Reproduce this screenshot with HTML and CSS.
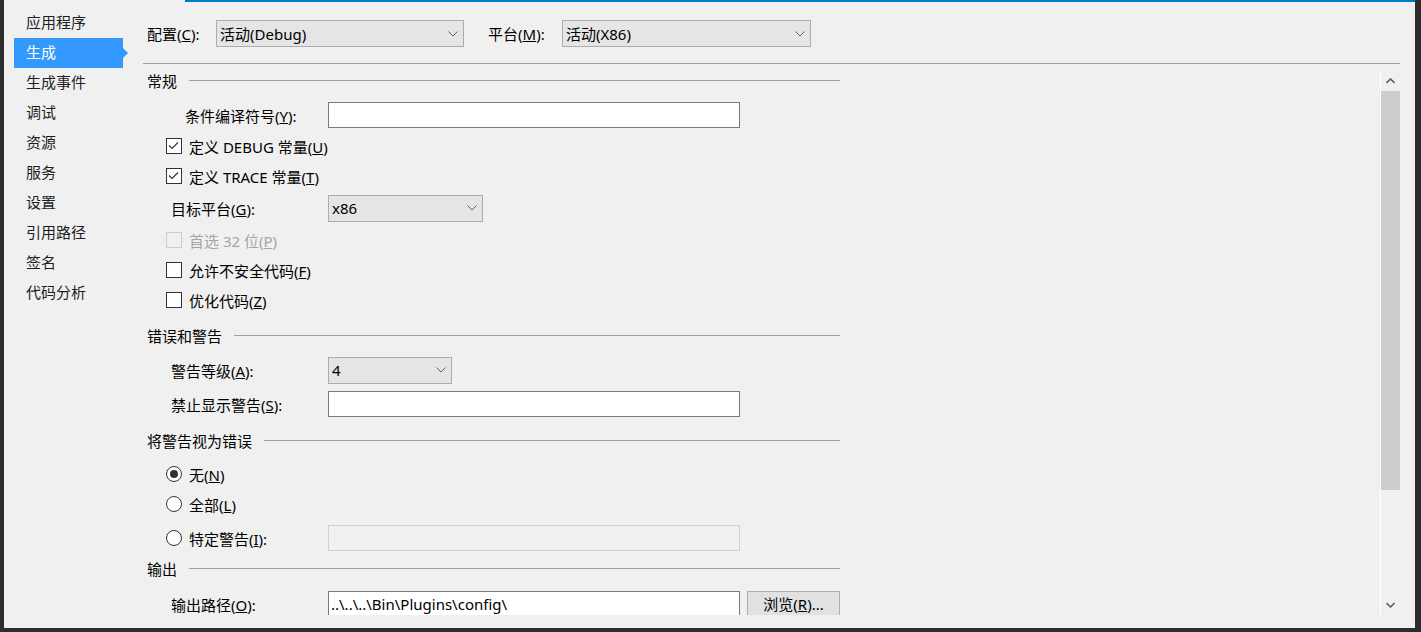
FILE: index.html
```html
<!DOCTYPE html>
<html lang="zh-CN">
<head>
    <meta charset="UTF-8">
    <meta name="viewport" content="width=device-width, initial-scale=1.0">
    <title>项目属性 - 生成</title>
    <link rel="stylesheet" href="styles.css">
</head>
<body>
    <div class="window">
        <div class="topline"></div>
        <div class="cuerpo">

            <ul class="nav">
                <li>应用程序</li>
                <li class="active">生成</li>
                <li>生成事件</li>
                <li>调试</li>
                <li>资源</li>
                <li>服务</li>
                <li>设置</li>
                <li>引用路径</li>
                <li>签名</li>
                <li>代码分析</li>
            </ul>

            <div class="main">
                <div class="toolbar">
                    <span class="tlabel">配置(<u>C</u>):</span>
                    <div class="combo cfg">
                        <span>活动(Debug)</span>
                        <svg width="10" height="6" viewBox="0 0 10 6"><path d="M0.5 0.5 L5 5 L9.5 0.5" fill="none" stroke="#606060" stroke-width="1"/></svg>
                    </div>
                    <span class="tlabel plat">平台(<u>M</u>):</span>
                    <div class="combo platcombo">
                        <span>活动(X86)</span>
                        <svg width="10" height="6" viewBox="0 0 10 6"><path d="M0.5 0.5 L5 5 L9.5 0.5" fill="none" stroke="#606060" stroke-width="1"/></svg>
                    </div>
                </div>
                <div class="divider"></div>

                <div class="panel">
                    <div class="content">

                        <div class="sec mt1">常规</div>
                        <div class="field mt5">
                            <span class="lbl indent">条件编译符号(<u>Y</u>):</span>
                            <div class="text"></div>
                        </div>
                        <div class="check mt1">
                            <span class="box"><svg width="14" height="14" viewBox="0 0 14 14"><path d="M2 6.5 L5 9.5 L11 3.5" fill="none" stroke="#333" stroke-width="1.1"/></svg></span>
                            <span>定义 DEBUG 常量(<u>U</u>)</span>
                        </div>
                        <div class="check">
                            <span class="box"><svg width="14" height="14" viewBox="0 0 14 14"><path d="M2 6.5 L5 9.5 L11 3.5" fill="none" stroke="#333" stroke-width="1.1"/></svg></span>
                            <span>定义 TRACE 常量(<u>T</u>)</span>
                        </div>
                        <div class="field mt2">
                            <span class="lbl">目标平台(<u>G</u>):</span>
                            <div class="combo target">
                                <span>x86</span>
                                <svg width="10" height="6" viewBox="0 0 10 6"><path d="M0.5 0.5 L5 5 L9.5 0.5" fill="none" stroke="#606060" stroke-width="1"/></svg>
                            </div>
                        </div>
                        <div class="check disabled mt2">
                            <span class="box"></span>
                            <span>首选 32 位(<u>P</u>)</span>
                        </div>
                        <div class="check">
                            <span class="box"></span>
                            <span>允许不安全代码(<u>F</u>)</span>
                        </div>
                        <div class="check">
                            <span class="box"></span>
                            <span>优化代码(<u>Z</u>)</span>
                        </div>

                        <div class="sec mt5">错误和警告</div>
                        <div class="field mt5">
                            <span class="lbl">警告等级(<u>A</u>):</span>
                            <div class="combo level">
                                <span>4</span>
                                <svg width="10" height="6" viewBox="0 0 10 6"><path d="M0.5 0.5 L5 5 L9.5 0.5" fill="none" stroke="#606060" stroke-width="1"/></svg>
                            </div>
                        </div>
                        <div class="field mt4">
                            <span class="lbl">禁止显示警告(<u>S</u>):</span>
                            <div class="text"></div>
                        </div>

                        <div class="sec mt6">将警告视为错误</div>
                        <div class="check mt4">
                            <span class="radio on"></span>
                            <span>无(<u>N</u>)</span>
                        </div>
                        <div class="check">
                            <span class="radio"></span>
                            <span>全部(<u>L</u>)</span>
                        </div>
                        <div class="check mt4">
                            <span class="radio"></span>
                            <span class="lblradio">特定警告(<u>I</u>):</span>
                            <div class="text off"></div>
                        </div>

                        <div class="sec">输出</div>
                        <div class="field mt6">
                            <span class="lbl">输出路径(<u>O</u>):</span>
                            <div class="text">..\..\..\Bin\Plugins\config\</div>
                            <div class="boton">浏览(<u>R</u>)...</div>
                        </div>

                    </div>

                    <div class="scrollbar">
                        <div class="sbbtn">
                            <svg width="9" height="6" viewBox="0 0 9 6"><path d="M0.5 5 L4.5 1 L8.5 5" fill="none" stroke="#606060" stroke-width="1.6"/></svg>
                        </div>
                        <div class="thumb"></div>
                        <div class="track"></div>
                        <div class="sbbtn">
                            <svg width="9" height="6" viewBox="0 0 9 6"><path d="M0.5 1 L4.5 5 L8.5 1" fill="none" stroke="#606060" stroke-width="1.6"/></svg>
                        </div>
                    </div>
                </div>
            </div>

        </div>
    </div>
</body>
</html>
```

FILE: styles.css
```css
body {
    margin: 0;
    background: #2d2d30;
    font-family: "Noto Sans", "Noto Sans CJK SC", sans-serif;
    font-size: 15px;
    color: #000;
    white-space: nowrap;
}

.window {
    width: 1421px;
    height: 632px;
    box-sizing: border-box;
    border-left: 4px solid #2d2d30;
    border-right: 6px solid #2d2d30;
    border-bottom: 4px solid #2d2d30;
    background: #f0f0f0;
    display: flex;
    flex-direction: column;
    overflow: hidden;
}
.topline {
    height: 2px;
    margin-left: 181px;
    background: #007acc;
    flex: none;
}
.cuerpo {
    display: flex;
    flex: 1;
    min-height: 0;
}

/* menu lateral */
.nav {
    width: 139px;
    flex: none;
    margin: 0;
    padding: 6px 0 0;
    list-style: none;
}
.nav li {
    position: relative;
    height: 30px;
    line-height: 29px;
    width: 109px;
    margin-left: 10px;
    padding-left: 12px;
    box-sizing: border-box;
    color: #1e1e1e;
}
.nav li.active {
    background: #3399ff;
    color: #fff;
}
.nav li.active::after {
    content: "";
    position: absolute;
    right: -5px;
    top: 10px;
    border-left: 5px solid #3399ff;
    border-top: 5px solid transparent;
    border-bottom: 5px solid transparent;
}

.main {
    flex: 1;
    min-width: 0;
    margin-right: 15px;
    display: flex;
    flex-direction: column;
}
.toolbar {
    display: flex;
    align-items: center;
    height: 27px;
    padding: 18px 0 16px 4px;
    flex: none;
}
.tlabel {
    width: 69px;
}
.tlabel.plat {
    width: 74px;
    margin-left: 24px;
}
.divider {
    height: 1px;
    background: #a0a0a0;
    flex: none;
}

/* combos y cajas */
.combo {
    display: flex;
    align-items: center;
    justify-content: space-between;
    height: 27px;
    box-sizing: border-box;
    border: 1px solid #adadad;
    background: #e5e5e5;
    padding: 0 5px 0 3px;
}
.cfg { width: 248px; }
.platcombo { width: 249px; }
.target { width: 155px; }
.level { width: 124px; }

.text {
    width: 412px;
    height: 26px;
    box-sizing: border-box;
    border: 1px solid #7a7a7a;
    background: #fff;
    padding-left: 2px;
    line-height: 24px;
    overflow: hidden;
    flex: none;
}
.text.off {
    border-color: #d2d2d2;
    background: #f0f0f0;
}
.boton {
    width: 93px;
    height: 26px;
    box-sizing: border-box;
    margin-left: 7px;
    border: 1px solid #adadad;
    background: #e1e1e1;
    text-align: center;
    line-height: 24px;
    flex: none;
}

.panel {
    display: flex;
    height: 551px;
    flex: none;
}
.content {
    flex: 1;
    min-width: 0;
    overflow: hidden;
    padding-left: 4px;
}

/* filas */
.sec {
    display: flex;
    align-items: center;
    height: 30px;
    width: 693px;
}
.sec::after {
    content: "";
    flex: 1;
    height: 1px;
    background: #a0a0a0;
    margin-left: 12px;
}
.field {
    display: flex;
    align-items: center;
    height: 30px;
    padding-left: 24px;
}
.lbl {
    width: 157px;
    flex: none;
}
.lbl.indent {
    width: 143px;
    padding-left: 14px;
}
.check {
    display: flex;
    align-items: center;
    height: 30px;
    padding-left: 19px;
}
.box, .radio {
    width: 16px;
    height: 16px;
    box-sizing: border-box;
    border: 1px solid #333;
    background: #fff;
    margin-right: 7px;
    flex: none;
    display: flex;
    align-items: center;
    justify-content: center;
}
.radio {
    border-radius: 50%;
}
.radio.on::after {
    content: "";
    width: 8px;
    height: 8px;
    border-radius: 50%;
    background: #333;
}
.lblradio {
    width: 139px;
    flex: none;
}
.disabled {
    color: #a6a6a6;
}
.disabled .box {
    border-color: #cccccc;
    background: #f0f0f0;
}

.mt1 { margin-top: 1px; }
.mt2 { margin-top: 2px; }
.mt4 { margin-top: 4px; }
.mt5 { margin-top: 5px; }
.mt6 { margin-top: 6px; }

/* barra de desplazamiento */
.scrollbar {
    width: 19px;
    flex: none;
    margin-top: 6px;
    border-left: 1px solid #fff;
    display: flex;
    flex-direction: column;
}
.sbbtn {
    height: 21px;
    flex: none;
    display: flex;
    align-items: center;
    justify-content: center;
}
.thumb {
    height: 399px;
    flex: none;
    background: #cdcdcd;
}
.track {
    flex: 1;
}
```
